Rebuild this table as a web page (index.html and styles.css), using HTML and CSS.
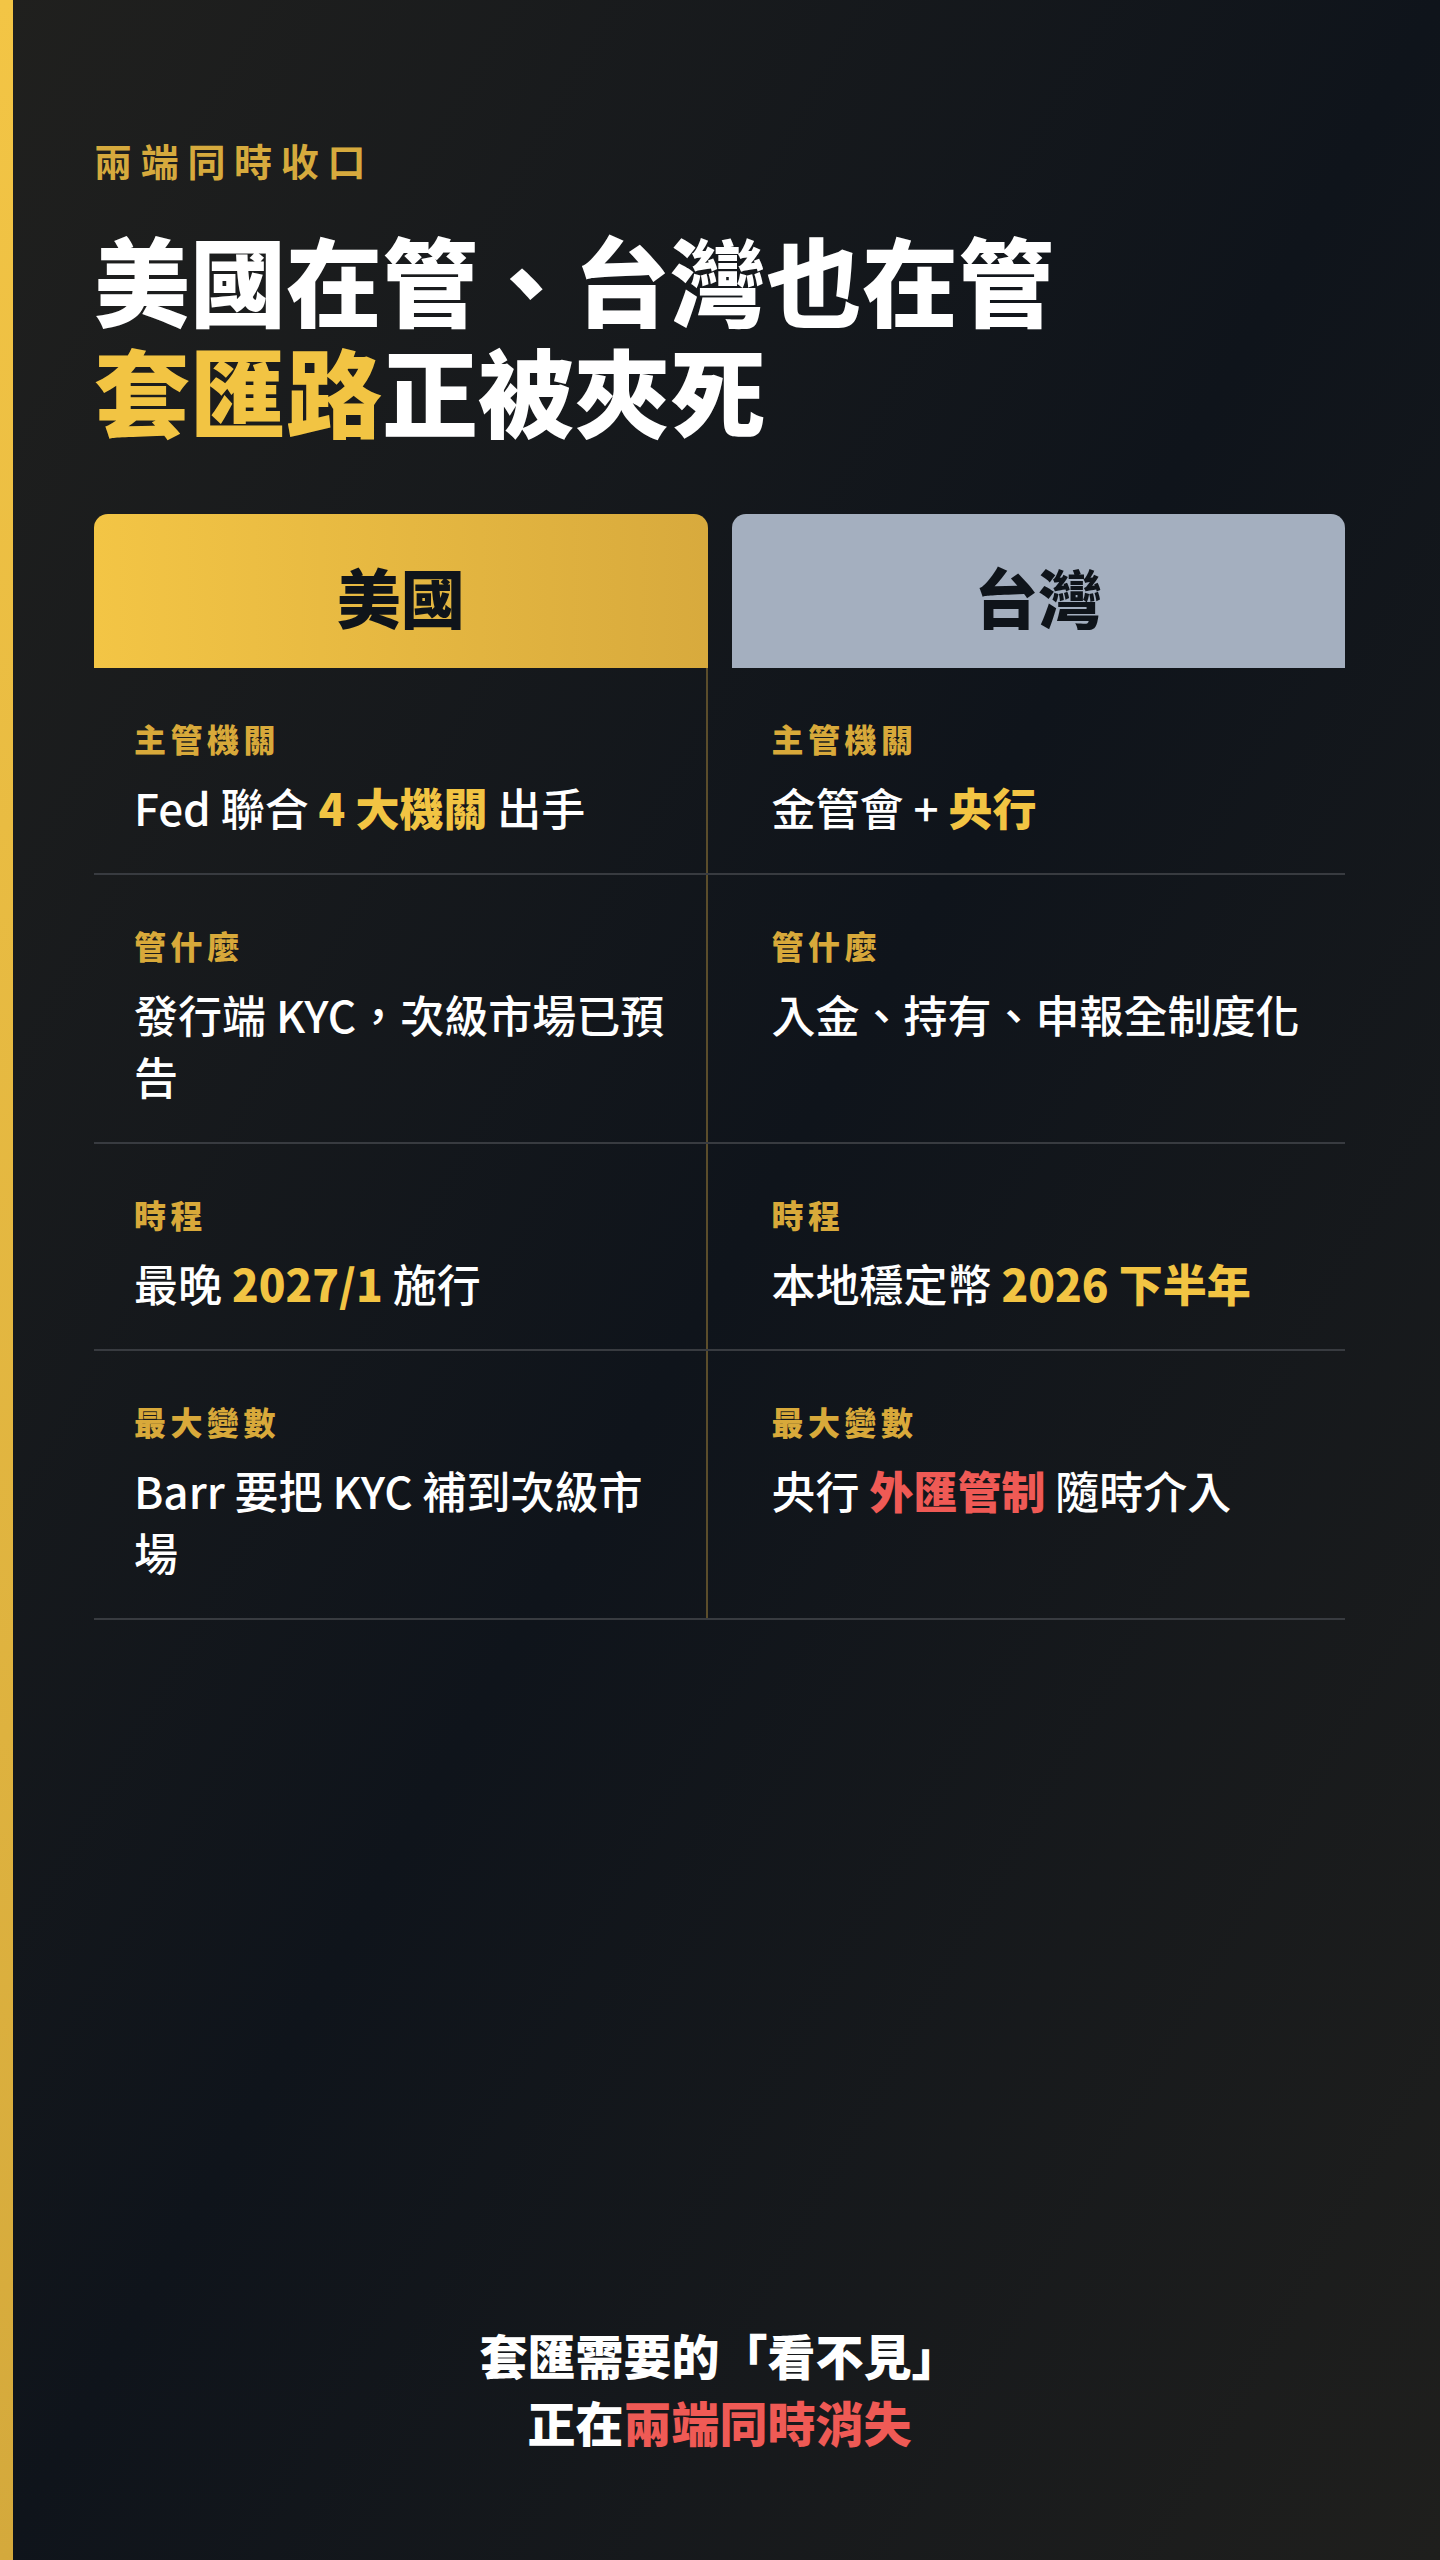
FILE: index.html
```html
<!DOCTYPE html>
<html lang="zh-Hant">
<head>
<meta charset="utf-8">
<title>兩端同時收口</title>
<link rel="stylesheet" href="styles.css">
</head>
<body>
<div class="page">
  <div class="accent-bar"></div>
  <main class="content">
    <div class="eyebrow">兩端同時收口</div>
    <h1 class="title">
      <span class="title-line">美國在管、台灣也在管</span>
      <span class="title-line"><span class="gold">套匯路</span>正被夾死</span>
    </h1>

    <section class="cmp">
      <div class="cmp-head">
        <div class="hd hd-us">美國</div>
        <div class="hd hd-tw">台灣</div>
      </div>

      <div class="row">
        <div class="cell cell-us">
          <div class="lbl">主管機關</div>
          <div class="val">Fed 聯合 <b class="hl">4 大機關</b> 出手</div>
        </div>
        <div class="cell">
          <div class="lbl">主管機關</div>
          <div class="val">金管會 + <b class="hl">央行</b></div>
        </div>
      </div>

      <div class="row">
        <div class="cell cell-us">
          <div class="lbl">管什麼</div>
          <div class="val">發行端 KYC，次級市場已預告</div>
        </div>
        <div class="cell">
          <div class="lbl">管什麼</div>
          <div class="val">入金、持有、申報全制度化</div>
        </div>
      </div>

      <div class="row">
        <div class="cell cell-us">
          <div class="lbl">時程</div>
          <div class="val">最晚 <b class="hl">2027/1</b> 施行</div>
        </div>
        <div class="cell">
          <div class="lbl">時程</div>
          <div class="val">本地穩定幣 <b class="hl">2026 下半年</b></div>
        </div>
      </div>

      <div class="row">
        <div class="cell cell-us">
          <div class="lbl">最大變數</div>
          <div class="val">Barr 要把 KYC 補到次級市場</div>
        </div>
        <div class="cell">
          <div class="lbl">最大變數</div>
          <div class="val">央行 <b class="hl-red">外匯管制</b> 隨時介入</div>
        </div>
      </div>
    </section>

    <footer class="caption">
      <div class="caption-line">套匯需要的「看不見」</div>
      <div class="caption-line">正在<span class="red">兩端同時消失</span></div>
    </footer>
  </main>
</div>
</body>
</html>
```

FILE: styles.css
```css
* {
  box-sizing: border-box;
}

html, body {
  margin: 0;
  padding: 0;
}

body {
  font-family: "Noto Sans CJK TC", "Noto Sans", sans-serif;
  color: #ffffff;
  background: #12161b;
}

.page {
  position: relative;
  width: 1440px;
  min-height: 2560px;
  display: flex;
  background: linear-gradient(to bottom right, #20201e 0%, #0f141b 50%, #1f1f1d 100%);
}

.accent-bar {
  width: 13px;
  flex: 0 0 13px;
  background: linear-gradient(to bottom, #f3c545 0%, #d4a93c 100%);
}

.content {
  flex: 1;
  display: flex;
  flex-direction: column;
  padding: 133px 95px 105px 81px;
}

.eyebrow {
  font-size: 38px;
  line-height: 53px;
  font-weight: 700;
  letter-spacing: 8.7px;
  color: #d6aa3d;
}

.title {
  margin: 36px 0 0 0;
  font-size: 96px;
  line-height: 111px;
  font-weight: 900;
  color: #ffffff;
}

.title-line {
  display: block;
  height: 111px;
}

.gold {
  color: #f2c443;
}

.cmp {
  margin-top: 70px;
}

.cmp-head {
  display: grid;
  grid-template-columns: 1fr 1fr;
  column-gap: 24px;
}

.hd {
  height: 154px;
  border-radius: 14px 14px 0 0;
  display: flex;
  align-items: center;
  justify-content: center;
  padding-top: 8px;
  font-size: 64px;
  font-weight: 900;
  color: #0f141a;
}

.hd-us {
  background: linear-gradient(to right, #f3c545 0%, #d8aa3d 100%);
}

.hd-tw {
  background: #a4afbf;
}

.row {
  display: grid;
  grid-template-columns: 1fr 1fr;
  column-gap: 24px;
  border-bottom: 2px solid #383b40;
}

.cell {
  padding: 48px 40px 35px 40px;
}

.cell-us {
  border-right: 2px solid #5b4d2b;
}

.lbl {
  font-size: 32px;
  line-height: 44px;
  font-weight: 900;
  letter-spacing: 4.5px;
  color: #d8a93a;
}

.val {
  margin-top: 16px;
  font-size: 44px;
  line-height: 62px;
  font-weight: 500;
  color: #ffffff;
}

.hl {
  font-weight: 900;
  color: #f2c443;
}

.hl-red {
  font-weight: 900;
  color: #ef5a55;
}

.caption {
  margin-top: auto;
  text-align: center;
  font-size: 48px;
  line-height: 67px;
  font-weight: 900;
  color: #ffffff;
}

.red {
  color: #ef5a55;
}
```
